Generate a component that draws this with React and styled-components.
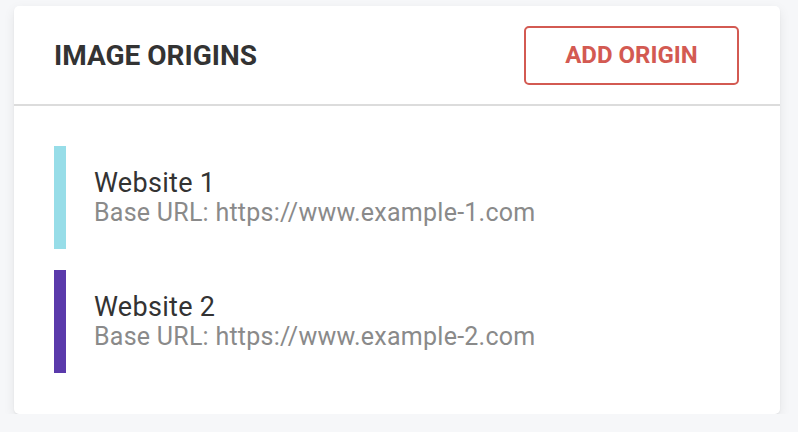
import React from "react";
import styled, { createGlobalStyle } from "styled-components";

const GlobalStyle = createGlobalStyle`
  html, body {
    margin: 0;
    padding: 0;
    background: #f6f7f9;
    font-family: Roboto, "Liberation Sans", Arial, sans-serif;
  }
  body {
    padding: 6px 18px 0 14px;
  }
`;

const Card = styled.section`
  width: 766px;
  background: #fff;
  border-radius: 5px;
  box-shadow: 0 4px 12px rgba(0, 0, 0, 0.08), 0 1px 2px rgba(0, 0, 0, 0.06);
  overflow: hidden;
`;

const Header = styled.header`
  height: 100px;
  box-sizing: border-box;
  padding: 0 41px 0 40px;
  display: flex;
  align-items: center;
  justify-content: space-between;
  border-bottom: 2px solid #dcdcdc;
`;

const Title = styled.h2`
  margin: 0;
  font-size: 28px;
  font-weight: 700;
  color: #333;
`;

const OutlineButton = styled.button`
  height: 59px;
  width: 215px;
  box-sizing: border-box;
  border: 2px solid #d35a52;
  border-radius: 5px;
  background: #fff;
  color: #d35a52;
  font-family: inherit;
  font-size: 24px;
  font-weight: 700;
  cursor: pointer;
`;

const List = styled.div`
  padding: 40px 40px 41px;
  display: flex;
  flex-direction: column;
  gap: 21px;
`;

const Item = styled.div`
  display: flex;
  align-items: center;
  height: 103px;
  gap: 28px;
`;

const Bar = styled.div`
  width: 12px;
  align-self: stretch;
  background: ${(p) => p.$color};
`;

const Name = styled.div`
  font-size: 27px;
  line-height: 30px;
  letter-spacing: 0.3px;
  color: #333;
`;

const Url = styled.div`
  font-size: 25px;
  line-height: 30px;
  letter-spacing: 0.25px;
  color: #8a8a8a;
`;

const origins = [
  { name: "Website 1", url: "https://www.example-1.com", color: "#97dde8" },
  { name: "Website 2", url: "https://www.example-2.com", color: "#5a3aab" },
];

export default function App() {
  return (
    <>
      <GlobalStyle />
      <Card>
        <Header>
          <Title>IMAGE ORIGINS</Title>
          <OutlineButton>ADD ORIGIN</OutlineButton>
        </Header>
        <List>
          {origins.map(({ name, url, color }) => (
            <Item key={name}>
              <Bar $color={color} />
              <div>
                <Name>{name}</Name>
                <Url>Base URL: {url}</Url>
              </div>
            </Item>
          ))}
        </List>
      </Card>
    </>
  );
}
